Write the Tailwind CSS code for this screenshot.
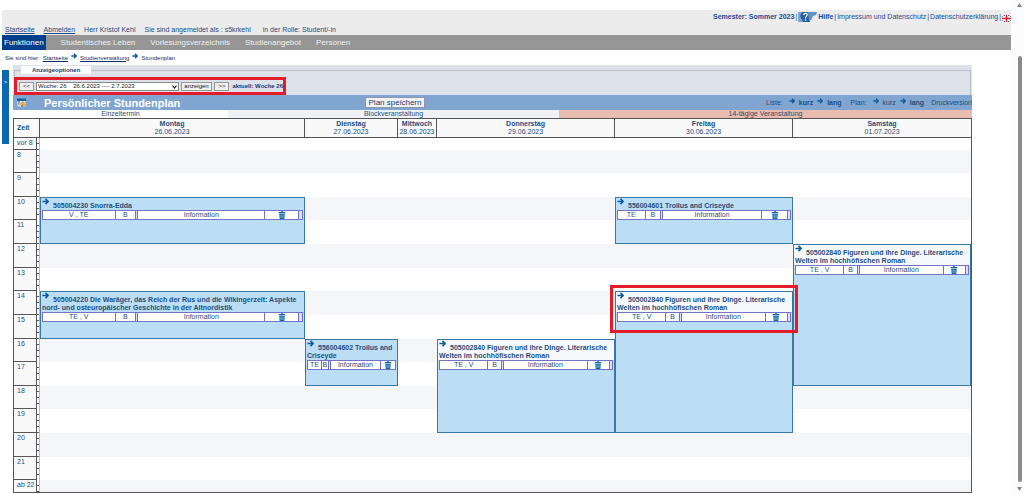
<!DOCTYPE html>
<html lang="de">
<head>
<meta charset="utf-8">
<title>Persönlicher Stundenplan</title>
<script src="https://cdn.jsdelivr.net/npm/@tailwindcss/browser@4"></script>
</head>
<body class="bg-white font-['Liberation_Sans',Arial,sans-serif] text-[7px] leading-[8px] text-[#1d4f7c]">
<svg class="hidden">
  <symbol id="arrow" viewBox="0 0 8 8"><path d="M0.5 4H7M4 1L7 4L4 7" fill="none" stroke="#0b5c9c" stroke-width="1.8"/></symbol>
  <symbol id="trash" viewBox="0 0 8 9"><path d="M0.3 1.2H2.8V0.3H5.2V1.2H7.7V2.4H0.3Z" fill="#0f68a8"/><path d="M0.9 3H7.1L6.6 9H1.4Z" fill="#0f68a8"/><path d="M2.7 4V8M4 4V8M5.3 4V8" stroke="#a9d2ec" stroke-width="0.6"/></symbol>
</svg>
<div class="flex min-h-screen">
<div class="min-w-0 flex-1 pl-[2px] pt-[10px]">

  <header class="bg-[#ececec]">
    <div class="flex h-[14px] items-center justify-end gap-[1px] text-[#1c4a90]">
      <b>Semester: Sommer 2023</b><span>|</span>
      <a href="#" class="flex items-center gap-[1px] font-bold">
        <svg class="h-[10px] w-[19px]" viewBox="0 0 19 10"><rect width="12" height="10" fill="#2a62a6"/><path d="M0 0H4L2 4L5 10H0Z" fill="#7fa5cf"/><path d="M10 0H19L18 3L15 4L13 8L11 9Z" fill="#5f92c6"/><path d="M5.5 3Q6 1.2 8 1.4Q10 2 8.6 4L7.6 5.5V6.5M7.5 7.6V8.8" fill="none" stroke="#fff" stroke-width="1.2"/></svg>
        Hilfe</a><span>|</span>
      <a href="#">Impressum und Datenschutz</a><span>|</span>
      <a href="#">Datenschutzerklärung</a><span>|</span>
      <a href="#" aria-label="English" class="pt-[3px]"><svg class="h-[7px] w-[9px]" viewBox="0 0 9 7"><rect width="9" height="7" fill="#33488f"/><path d="M0 0L9 7M9 0L0 7" stroke="#fff" stroke-width="1.4"/><path d="M4.5 0V7M0 3.5H9" stroke="#fff" stroke-width="3"/><path d="M4.5 0V7M0 3.5H9" stroke="#e0202c" stroke-width="1.6"/></svg></a>
    </div>
    <div class="flex h-[11px] items-center gap-[9px] pl-[3px] text-[#1c4a80]">
      <a href="#" class="underline">Startseite</a>
      <a href="#" class="underline">Abmelden</a>
      <span>Herr Kristof Kehl</span>
      <span>Sie sind angemeldet als : s5krkehl</span>
      <span class="pl-[3px]">in der Rolle: Student/-in</span>
    </div>
  </header>

  <nav class="flex h-[15px] items-center gap-[15px] bg-[#969696] text-[8px] text-[#f0f0f0]">
    <a href="#" class="flex h-full items-center bg-[#003f8a] px-[2px] text-white">Funktionen</a>
    <a href="#">Studentisches Leben</a>
    <a href="#">Vorlesungsverzeichnis</a>
    <a href="#">Studienangebot</a>
    <a href="#">Personen</a>
  </nav>

  <div class="flex h-[15px] items-center gap-[3px] pl-[3px] text-[6px] text-[#14305c]">
    <span>Sie sind hier:</span><a href="#" class="underline">Startseite</a>
    <svg class="mb-[4px] size-[6px]"><use href="#arrow"/></svg>
    <a href="#" class="underline">Studienverwaltung</a>
    <svg class="mb-[4px] size-[6px]"><use href="#arrow"/></svg>
    <span>Stundenplan</span>
  </div>

  <div class="flex items-start gap-[4px] pr-[39px]">
    <button type="button" class="mt-[5px] h-[74px] w-[7px] bg-[#0b68ae] pb-[50px] text-[6px] text-white">&gt;</button>
    <main class="min-w-0 flex-1">
      <div class="bg-[#dde1ea] pt-[1px]">
        <fieldset class="mx-[1px] border border-b-0 border-[#b9bec9]">
          <legend class="ml-[6px] bg-white px-[11px] text-[6px] font-bold text-[#14406e]">Anzeigeoptionen</legend>
          <form class="-ml-[1px] mt-[3px] flex h-[18px] w-[272px] items-center gap-[2px] border-3 border-[#e21c2a] pl-[2px] text-[6px] whitespace-nowrap text-[#222]">
            <button type="button" class="h-[9px] w-[15px] border border-[#999] bg-[#efefef] leading-[7px]">&lt;&lt;</button>
            <div class="relative h-[9px] w-[143px]">
              <select aria-label="Woche" class="block h-full w-full appearance-none border border-[#888] bg-white pl-[1px] leading-[7px]"><option>Woche: 26 &nbsp;&nbsp; 26.6.2023 ---- 2.7.2023</option></select>
              <svg class="pointer-events-none absolute right-[2px] top-[3px] h-[4px] w-[5px]" viewBox="0 0 5 4"><path d="M0.5 0.5L2.5 3L4.5 0.5" fill="none" stroke="#111" stroke-width="1.2"/></svg>
            </div>
            <button type="button" class="h-[9px] w-[32px] border border-[#999] bg-[#efefef] leading-[7px]">anzeigen</button>
            <button type="button" class="h-[9px] w-[15px] border border-[#999] bg-[#efefef] leading-[7px]">&gt;&gt;</button>
            <b class="pl-[1px] text-[#1b3a70]">aktuell: Woche 26</b>
          </form>
        </fieldset>
      </div>

      <div class="flex h-[15px] items-center bg-[#80a5d0]">
        <div class="flex w-[352px] items-center">
          <svg class="ml-[4px] h-[9px] w-[9px]" viewBox="0 0 9 9"><rect x="0.5" y="1.5" width="8" height="7" fill="#dfe8ef"/><rect y="0.5" width="9" height="2.5" fill="#1d5fa3"/><path d="M2 6L6 3L9 7L7 9Z" fill="#eba43c"/><path d="M1 4H3M1 6H2M4 8H6" stroke="#1d5fa3"/></svg>
          <h1 class="pl-[18px] text-[11px] font-bold leading-[14px] text-white">Persönlicher Stundenplan</h1>
        </div>
        <button type="button" class="h-[11px] w-[60px] border border-[#8c98a8] bg-[#f0f2f5] text-[8px] leading-[9px] text-[#1d3f63]">Plan speichern</button>
        <div class="ml-auto flex items-center gap-[4px]">
          <span class="pr-[2px]">Liste:</span>
          <svg class="mb-[3px] size-[6px]"><use href="#arrow"/></svg><a href="#" class="font-bold">kurz</a>
          <svg class="mb-[3px] size-[6px]"><use href="#arrow"/></svg><a href="#" class="font-bold">lang</a>
          <span class="pl-[5px] pr-[2px]">Plan:</span>
          <svg class="mb-[3px] size-[6px]"><use href="#arrow"/></svg><a href="#">kurz</a>
          <svg class="mb-[3px] size-[6px]"><use href="#arrow"/></svg><a href="#" class="font-bold">lang</a>
          <a href="#" class="pl-[3px]">Druckversion</a>
        </div>
      </div>

      <div class="flex h-[8px] text-center">
        <div class="w-[215px]">Einzeltermin</div>
        <div class="w-[331px] bg-[#eff2f7]">Blockveranstaltung</div>
        <div class="flex-1 bg-[#e8bdb1] text-[#3c4a62]">14-tägige Veranstaltung</div>
      </div>

      <table class="w-full table-fixed border-separate border-spacing-0 border border-[#555]">
        <colgroup>
          <col class="w-[23px]"><col class="w-[3px]"><col class="w-[27.7%]"><col class="w-[9.7%]"><col class="w-[4.1%]"><col class="w-[18.6%]"><col class="w-[18.6%]"><col class="w-[18.6%]">
        </colgroup>
        <thead>
          <tr class="h-[19px] bg-[#f9f9f9] *:border-b *:border-r *:border-[#555] *:p-0 *:whitespace-nowrap">
            <th colspan="2"><div class="pl-[3px] text-left">Zeit</div></th>
            <th>Montag<br><span class="font-normal">26.06.2023</span></th>
            <th>Dienstag<br><span class="font-normal">27.06.2023</span></th>
            <th>Mittwoch<br><span class="font-normal">28.06.2023</span></th>
            <th>Donnerstag<br><span class="font-normal">29.06.2023</span></th>
            <th>Freitag<br><span class="font-normal">30.06.2023</span></th>
            <th class="border-r-0!">Samstag<br><span class="font-normal">01.07.2023</span></th>
          </tr>
        </thead>
        <tbody class="[&>tr>td]:p-0 [&>tr>td]:align-top [&>tr>th]:border-b [&>tr>th]:border-r [&>tr>th]:border-[#555] [&>tr>th]:bg-[#f9f9f9] [&>tr>th]:p-0 [&>tr>th]:pt-[1px] [&>tr>th]:pl-[3px] [&>tr>th]:text-left [&>tr>th]:align-top [&>tr>th]:font-normal [&>tr>th]:whitespace-nowrap [&>tr>td:nth-child(2)]:bg-[repeating-linear-gradient(#fff_0_5px,#555_5px_6px)] [&>tr>td:nth-child(2)]:border-r [&>tr>td:nth-child(2)]:border-[#bbb]">
          <tr class="h-[12px]"><th scope="row">vor 8</th><td></td><td></td><td></td><td></td><td></td><td></td><td></td></tr>
          <tr class="h-[23px] bg-[#f4f6f9]"><th scope="row">8</th><td></td><td></td><td></td><td></td><td></td><td></td><td></td></tr>
          <tr class="h-[24px]"><th scope="row">9</th><td></td><td></td><td></td><td></td><td></td><td></td><td></td></tr>
          <tr class="h-[23px] bg-[#f4f6f9]"><th scope="row">10</th><td></td>
            <td rowspan="2" class="border border-[#3b76a5] bg-[#bcdef5]">
              <div class="px-[1px] font-bold"><svg class="mb-[3px] mr-[4px] inline size-[7px] align-baseline"><use href="#arrow"/></svg><a href="#">505004230 Snorra-Edda</a></div>
              <div class="px-[1px]"><table class="w-full table-fixed border-separate border-spacing-0 border border-[#7472c4] bg-white text-center"><tr class="h-[8px] *:border-r *:border-[#7472c4] *:p-0"><td class="w-[28%]">V , TE</td><td class="w-[8%]">B</td><td class="w-[2px] bg-[#dcdcf2]"></td><td>Information</td><td class="w-[13%]"><button type="button" aria-label="Löschen" class="block w-full"><svg class="mx-auto h-[8px] w-[8px]"><use href="#trash"/></svg></button></td><td class="w-[3px] border-r-0! bg-[#dcdcf2]"></td></tr></table></div>
            </td>
            <td></td><td></td><td></td>
            <td rowspan="2" class="border border-[#3b76a5] bg-[#bcdef5]">
              <div class="px-[1px] font-bold"><svg class="mb-[3px] mr-[4px] inline size-[7px] align-baseline"><use href="#arrow"/></svg><a href="#">556004601 Troilus and Criseyde</a></div>
              <div class="px-[1px]"><table class="w-full table-fixed border-separate border-spacing-0 border border-[#7472c4] bg-white text-center"><tr class="h-[8px] *:border-r *:border-[#7472c4] *:p-0"><td class="w-[16%]">TE</td><td class="w-[9%]">B</td><td class="w-[2px] bg-[#dcdcf2]"></td><td>Information</td><td class="w-[15%]"><button type="button" aria-label="Löschen" class="block w-full"><svg class="mx-auto h-[8px] w-[8px]"><use href="#trash"/></svg></button></td><td class="w-[2px] border-r-0! bg-[#dcdcf2]"></td></tr></table></div>
            </td>
            <td></td></tr>
          <tr class="h-[24px]"><th scope="row">11</th><td></td><td></td><td></td><td></td><td></td></tr>
          <tr class="h-[24px] bg-[#f4f6f9]"><th scope="row">12</th><td></td><td></td><td></td><td></td><td></td><td></td>
            <td rowspan="6" class="border border-[#3b76a5] bg-[#bcdef5]">
              <div class="bg-[#f6f9fc] px-[1px] font-bold"><svg class="mb-[3px] mr-[4px] inline size-[7px] align-baseline"><use href="#arrow"/></svg><a href="#">505002840 Figuren und ihre Dinge. Literarische Welten im hochhöfischen Roman</a></div>
              <div class="px-[1px]"><table class="w-full table-fixed border-separate border-spacing-0 border border-[#7472c4] bg-white text-center"><tr class="h-[8px] *:border-r *:border-[#7472c4] *:p-0"><td class="w-[28%]">TE , V</td><td class="w-[8%]">B</td><td class="w-[2px] bg-[#dcdcf2]"></td><td>Information</td><td class="w-[13%]"><button type="button" aria-label="Löschen" class="block w-full"><svg class="mx-auto h-[8px] w-[8px]"><use href="#trash"/></svg></button></td><td class="w-[2px] border-r-0! bg-[#dcdcf2]"></td></tr></table></div>
            </td></tr>
          <tr class="h-[23px]"><th scope="row">13</th><td></td><td></td><td></td><td></td><td></td><td></td></tr>
          <tr class="h-[24px] bg-[#f4f6f9]"><th scope="row">14</th><td></td>
            <td rowspan="2" class="border border-[#3b76a5] bg-[#bcdef5]">
              <div class="px-[1px] font-bold"><svg class="mb-[3px] mr-[4px] inline size-[7px] align-baseline"><use href="#arrow"/></svg><a href="#">505004220 Die Waräger, das Reich der Rus und die Wikingerzeit: Aspekte nord- und osteuropäischer Geschichte in der Altnordistik</a></div>
              <div class="px-[1px]"><table class="w-full table-fixed border-separate border-spacing-0 border border-[#7472c4] bg-white text-center"><tr class="h-[8px] *:border-r *:border-[#7472c4] *:p-0"><td class="w-[28%]">TE , V</td><td class="w-[8%]">B</td><td class="w-[2px] bg-[#dcdcf2]"></td><td>Information</td><td class="w-[13%]"><button type="button" aria-label="Löschen" class="block w-full"><svg class="mx-auto h-[8px] w-[8px]"><use href="#trash"/></svg></button></td><td class="w-[3px] border-r-0! bg-[#dcdcf2]"></td></tr></table></div>
            </td>
            <td></td><td></td><td></td>
            <td rowspan="6" class="relative border border-[#3b76a5] bg-[#bcdef5]">
              <div class="bg-[#f6f9fc] px-[1px] font-bold"><svg class="mb-[3px] mr-[4px] inline size-[7px] align-baseline"><use href="#arrow"/></svg><a href="#">505002840 Figuren und ihre Dinge. Literarische Welten im hochhöfischen Roman</a></div>
              <div class="px-[1px]"><table class="w-full table-fixed border-separate border-spacing-0 border border-[#7472c4] bg-white text-center"><tr class="h-[8px] *:border-r *:border-[#7472c4] *:p-0"><td class="w-[28%]">TE , V</td><td class="w-[8%]">B</td><td class="w-[2px] bg-[#dcdcf2]"></td><td>Information</td><td class="w-[13%]"><button type="button" aria-label="Löschen" class="block w-full"><svg class="mx-auto h-[8px] w-[8px]"><use href="#trash"/></svg></button></td><td class="w-[2px] border-r-0! bg-[#dcdcf2]"></td></tr></table></div>
              <div class="pointer-events-none absolute -inset-x-[6px] -top-[7px] z-10 h-[48px] border-3 border-[#e21c2a]"></div>
            </td></tr>
          <tr class="h-[24px]"><th scope="row">15</th><td></td><td></td><td></td><td></td></tr>
          <tr class="h-[23px] bg-[#f4f6f9]"><th scope="row">16</th><td></td><td></td>
            <td rowspan="2" class="border border-[#3b76a5] bg-[#bcdef5]">
              <div class="px-[1px] font-bold"><svg class="mb-[3px] mr-[4px] inline size-[7px] align-baseline"><use href="#arrow"/></svg><a href="#">556004602 Troilus and Criseyde</a></div>
              <div class="px-[1px]"><table class="w-full table-fixed border-separate border-spacing-0 border border-[#7472c4] bg-white text-center"><tr class="h-[8px] *:border-r *:border-[#7472c4] *:p-0"><td class="w-[16%]">TE</td><td class="w-[8%]">B</td><td class="w-[2px] bg-[#dcdcf2]"></td><td>Information</td><td class="w-[16%] border-r-0!"><button type="button" aria-label="Löschen" class="block w-full"><svg class="mx-auto h-[8px] w-[8px]"><use href="#trash"/></svg></button></td></tr></table></div>
            </td>
            <td></td>
            <td rowspan="4" class="border border-[#3b76a5] bg-[#bcdef5]">
              <div class="bg-[#f6f9fc] px-[1px] font-bold"><svg class="mb-[3px] mr-[4px] inline size-[7px] align-baseline"><use href="#arrow"/></svg><a href="#">505002840 Figuren und ihre Dinge. Literarische Welten im hochhöfischen Roman</a></div>
              <div class="px-[1px]"><table class="w-full table-fixed border-separate border-spacing-0 border border-[#7472c4] bg-white text-center"><tr class="h-[8px] *:border-r *:border-[#7472c4] *:p-0"><td class="w-[28%]">TE , V</td><td class="w-[8%]">B</td><td class="w-[2px] bg-[#dcdcf2]"></td><td>Information</td><td class="w-[13%]"><button type="button" aria-label="Löschen" class="block w-full"><svg class="mx-auto h-[8px] w-[8px]"><use href="#trash"/></svg></button></td><td class="w-[2px] border-r-0! bg-[#dcdcf2]"></td></tr></table></div>
            </td></tr>
          <tr class="h-[24px]"><th scope="row">17</th><td></td><td></td><td></td></tr>
          <tr class="h-[23px] bg-[#f4f6f9]"><th scope="row">18</th><td></td><td></td><td></td><td></td><td></td></tr>
          <tr class="h-[24px]"><th scope="row">19</th><td></td><td></td><td></td><td></td><td></td></tr>
          <tr class="h-[24px] bg-[#f4f6f9]"><th scope="row">20</th><td></td><td></td><td></td><td></td><td></td><td></td><td></td></tr>
          <tr class="h-[23px]"><th scope="row">21</th><td></td><td></td><td></td><td></td><td></td><td></td><td></td></tr>
          <tr class="h-[12px] bg-[#f4f6f9]"><th scope="row" class="border-b-0!">ab 22</th><td></td><td></td><td></td><td></td><td></td><td></td><td></td></tr>
        </tbody>
      </table>
    </main>
  </div>
</div>

<div class="flex w-[13px] flex-col items-center bg-[#fcfcfc] pt-[3px]" aria-hidden="true">
  <svg class="ml-[4px] h-[4px] w-[5px]" viewBox="0 0 5 4"><path d="M0 4L2.5 0L5 4Z" fill="#858585"/></svg>
  <div class="ml-[4px] mt-[49px] w-[4px] flex-1 rounded-full bg-[#8a8a8a]"></div>
  <svg class="mb-[3px] ml-[4px] mt-[5px] h-[4px] w-[5px]" viewBox="0 0 5 4"><path d="M0 0L2.5 4L5 0Z" fill="#858585"/></svg>
</div>
</div>
</body>
</html>
